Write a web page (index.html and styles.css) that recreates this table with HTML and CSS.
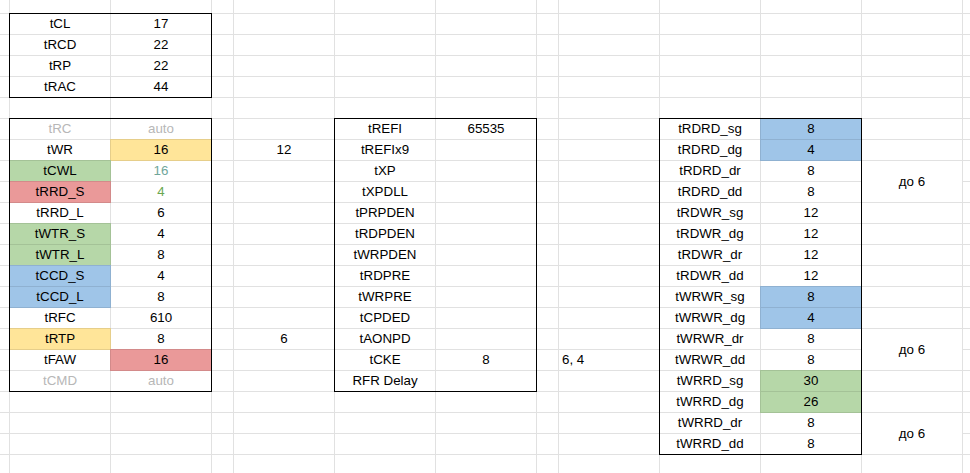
FILE: index.html
```html
<!DOCTYPE html>
<html>
<head>
<meta charset="utf-8">
<link rel="stylesheet" href="styles.css">
</head>
<body>
<div class="sheet">
  <div class="blk b1">
    <div>tCL</div><div>17</div>
    <div>tRCD</div><div>22</div>
    <div>tRP</div><div>22</div>
    <div>tRAC</div><div>44</div>
  </div>

  <div class="blk b2">
    <div class="gray">tRC</div><div class="gray">auto</div>
    <div>tWR</div><div class="y">16</div>
    <div class="g">tCWL</div><div class="tgreen2">16</div>
    <div class="r">tRRD_S</div><div class="tgreen">4</div>
    <div>tRRD_L</div><div>6</div>
    <div class="g">tWTR_S</div><div>4</div>
    <div class="g">tWTR_L</div><div>8</div>
    <div class="b">tCCD_S</div><div>4</div>
    <div class="b">tCCD_L</div><div>8</div>
    <div>tRFC</div><div>610</div>
    <div class="y">tRTP</div><div>8</div>
    <div>tFAW</div><div class="r">16</div>
    <div class="gray">tCMD</div><div class="gray">auto</div>
  </div>

  <div class="note n12">12</div>
  <div class="note n6">6</div>

  <div class="blk b3">
    <div>tREFI</div><div>65535</div>
    <div>tREFIx9</div><div></div>
    <div>tXP</div><div></div>
    <div>tXPDLL</div><div></div>
    <div>tPRPDEN</div><div></div>
    <div>tRDPDEN</div><div></div>
    <div>tWRPDEN</div><div></div>
    <div>tRDPRE</div><div></div>
    <div>tWRPRE</div><div></div>
    <div>tCPDED</div><div></div>
    <div>tAONPD</div><div></div>
    <div>tCKE</div><div>8</div>
    <div>RFR Delay</div><div></div>
  </div>

  <div class="note left n64">6, 4</div>

  <div class="blk b4">
    <div>tRDRD_sg</div><div class="b">8</div>
    <div>tRDRD_dg</div><div class="b">4</div>
    <div>tRDRD_dr</div><div>8</div>
    <div>tRDRD_dd</div><div>8</div>
    <div>tRDWR_sg</div><div>12</div>
    <div>tRDWR_dg</div><div>12</div>
    <div>tRDWR_dr</div><div>12</div>
    <div>tRDWR_dd</div><div>12</div>
    <div>tWRWR_sg</div><div class="b">8</div>
    <div>tWRWR_dg</div><div class="b">4</div>
    <div>tWRWR_dr</div><div>8</div>
    <div>tWRWR_dd</div><div>8</div>
    <div>tWRRD_sg</div><div class="g">30</div>
    <div>tWRRD_dg</div><div class="g">26</div>
    <div>tWRRD_dr</div><div>8</div>
    <div>tWRRD_dd</div><div>8</div>
  </div>

  <div class="note merged d1">до 6</div>
  <div class="note merged d2">до 6</div>
  <div class="note merged d3">до 6</div>
</div>
</body>
</html>
```

FILE: styles.css
```css
html, body {
  margin: 0;
  background: #fff;
  overflow: hidden;
}

.sheet {
  display: grid;
  grid-template-columns: 9px 100px 100px 21px 100px 100px 100px 21px 100px 100px 100px 100px 100px;
  grid-template-rows: 13px repeat(22, 20px);
  gap: 1px;
  width: 970px;
  font: 10pt "Liberation Sans", Arial, sans-serif;
  color: #000;
  background:
    linear-gradient(#e1e1e1, #e1e1e1) 9px 0 / 1px 100% no-repeat,
    linear-gradient(#e1e1e1, #e1e1e1) 110px 0 / 1px 100% no-repeat,
    linear-gradient(#e1e1e1, #e1e1e1) 211px 0 / 1px 100% no-repeat,
    linear-gradient(#e1e1e1, #e1e1e1) 233px 0 / 1px 100% no-repeat,
    linear-gradient(#e1e1e1, #e1e1e1) 334px 0 / 1px 100% no-repeat,
    linear-gradient(#e1e1e1, #e1e1e1) 435px 0 / 1px 100% no-repeat,
    linear-gradient(#e1e1e1, #e1e1e1) 536px 0 / 1px 100% no-repeat,
    linear-gradient(#e1e1e1, #e1e1e1) 558px 0 / 1px 100% no-repeat,
    linear-gradient(#e1e1e1, #e1e1e1) 659px 0 / 1px 100% no-repeat,
    linear-gradient(#e1e1e1, #e1e1e1) 760px 0 / 1px 100% no-repeat,
    linear-gradient(#e1e1e1, #e1e1e1) 861px 0 / 1px 100% no-repeat,
    linear-gradient(#e1e1e1, #e1e1e1) 962px 0 / 1px 100% no-repeat,
    linear-gradient(#e1e1e1 1px, #fff 1px) 0 13px / 100% 21px repeat-y;
}

.blk {
  margin: -1px;
  border: 1px solid #000;
  background: #e1e1e1;
  display: grid;
  grid-template-columns: 100px 100px;
  grid-auto-rows: 20px;
  gap: 1px;
  overflow: hidden;
}

.blk > div,
.note {
  display: flex;
  align-items: center;
  justify-content: center;
  line-height: 20px;
  white-space: nowrap;
}

.blk > div {
  background: #fff;
}

.b1 { grid-column: 2 / 4; grid-row: 2 / 6; }
.b2 { grid-column: 2 / 4; grid-row: 7 / 20; }
.b3 { grid-column: 6 / 8; grid-row: 7 / 20; }
.b4 { grid-column: 10 / 12; grid-row: 7 / 23; }

.n12 { grid-column: 5; grid-row: 8; }
.n6 { grid-column: 5; grid-row: 17; }
.n64 { grid-column: 9; grid-row: 18; }

.left {
  justify-content: flex-start;
  padding-left: 3px;
}

.merged { background: #fff; }
.d1 { grid-column: 12; grid-row: 9 / 11; }
.d2 { grid-column: 12; grid-row: 17 / 19; }
.d3 { grid-column: 12; grid-row: 21 / 23; }

.blk > .y { background: #ffe599; box-shadow: 0 0 0 1px #e6ce8a; }
.blk > .g { background: #b6d7a8; box-shadow: 0 0 0 1px #a4c297; }
.blk > .r { background: #ea9999; box-shadow: 0 0 0 1px #d38a8a; }
.blk > .b { background: #9fc5e8; box-shadow: 0 0 0 1px #8fb1d1; }

.gray { color: #b7b7b7; }
.tgreen { color: #6aa84f; }
.tgreen2 { color: #6fa69a; }
```
